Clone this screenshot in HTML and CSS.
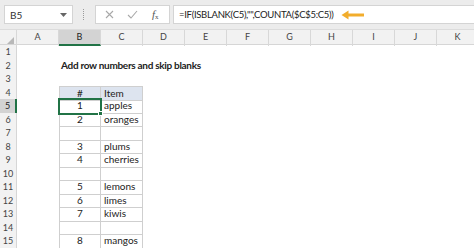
FILE: index.html
```html
<!DOCTYPE html>
<html lang="en">
<head>
    <meta charset="UTF-8">
    <title>Add row numbers and skip blanks</title>
    <link rel="stylesheet" href="styles.css">
</head>
<body>
    <div class="formula-bar">
        <div class="name-box">
            <span>B5</span>
            <svg class="drop" width="7" height="4" viewBox="0 0 7 4"><path d="M0 0H7L3.5 4Z" fill="#666"/></svg>
        </div>
        <div class="grip"></div>
        <div class="fx-buttons">
            <svg width="9" height="9" viewBox="0 0 9 9"><path d="M1 1L8 8M8 1L1 8" stroke="#a8a8a8" stroke-width="1.1" fill="none"/></svg>
            <svg width="11" height="9" viewBox="0 0 11 9"><path d="M1 5L4 8L10 1" stroke="#a8a8a8" stroke-width="1.1" fill="none"/></svg>
            <span class="fx"><i>f</i><sub>x</sub></span>
        </div>
        <div class="formula">
            <span>=IF(ISBLANK(C5),"",COUNTA($C$5:C5))</span>
            <svg class="arrow" width="24" height="10" viewBox="0 0 24 10"><path d="M23 5H4" stroke="#f2ad2c" stroke-width="3" fill="none"/><path d="M0.5 5L7.5 0.5V9.5Z" fill="#f2ad2c"/></svg>
        </div>
    </div>

    <div class="sheet">
        <div class="row col-head">
            <div class="corner"></div>
            <div>A</div><div class="active">B</div><div>C</div><div>D</div><div>E</div><div>F</div><div>G</div><div>H</div><div>I</div><div>J</div><div>K</div>
        </div>
        <div class="row"><div class="rh">1</div></div>
        <div class="row"><div class="rh">2</div><div></div><div class="title">Add row numbers and skip blanks</div></div>
        <div class="row"><div class="rh">3</div></div>
        <div class="row"><div class="rh">4</div><div></div><div class="t num th">#</div><div class="t th">Item</div></div>
        <div class="row"><div class="rh active">5</div><div></div><div class="t num sel">1</div><div class="t">apples</div></div>
        <div class="row"><div class="rh">6</div><div></div><div class="t num">2</div><div class="t">oranges</div></div>
        <div class="row"><div class="rh">7</div><div></div><div class="t num"></div><div class="t"></div></div>
        <div class="row"><div class="rh">8</div><div></div><div class="t num">3</div><div class="t">plums</div></div>
        <div class="row"><div class="rh">9</div><div></div><div class="t num">4</div><div class="t">cherries</div></div>
        <div class="row"><div class="rh">10</div><div></div><div class="t num"></div><div class="t"></div></div>
        <div class="row"><div class="rh">11</div><div></div><div class="t num">5</div><div class="t">lemons</div></div>
        <div class="row"><div class="rh">12</div><div></div><div class="t num">6</div><div class="t">limes</div></div>
        <div class="row"><div class="rh">13</div><div></div><div class="t num">7</div><div class="t">kiwis</div></div>
        <div class="row"><div class="rh">14</div><div></div><div class="t num"></div><div class="t"></div></div>
        <div class="row"><div class="rh">15</div><div></div><div class="t num">8</div><div class="t">mangos</div></div>
        <div class="row"><div class="rh"></div></div>
    </div>
</body>
</html>
```

FILE: styles.css
```css
body {
    margin: 0;
    width: 474px;
    height: 248px;
    overflow: hidden;
    background: #fff;
    font-family: Lato, "Open Sans", sans-serif;
    color: #222;
}
.formula-bar {
    display: flex;
    align-items: center;
    height: 30px;
    background: #ececec;
    box-sizing: border-box;
    padding-left: 4px;
    border-bottom: 1px solid #dcdcdc;
}
.name-box, .fx-buttons, .formula {
    height: 19px;
    background: #fff;
    border: 1px solid #d4d4d4;
    box-sizing: border-box;
    display: flex;
    align-items: center;
    font-size: 10px;
}
.name-box {
    width: 69px;
    padding: 0 5px 0 5px;
    justify-content: space-between;
    color: #333;
}
.grip {
    width: 1px;
    height: 11px;
    margin: 0 10px;
    border-left: 1px dotted #9a9a9a;
}
.fx-buttons {
    width: 75px;
    padding-left: 9px;
    gap: 13px;
}
.fx {
    font-family: "Liberation Serif", serif;
    font-size: 11px;
    color: #555;
    margin-left: 1px;
}
.fx sub {
    font-size: 7px;
    vertical-align: -1px;
}
.formula {
    flex: 1;
    margin-left: 3px;
    padding-left: 5px;
    border-right: none;
    color: #222;
    font-size: 9.5px;
    letter-spacing: -0.3px;
}
.arrow {
    margin-left: 8px;
}
.sheet {
    font-size: 10px;
}
.row {
    display: grid;
    grid-template-columns: 17px repeat(11, 42px);
    height: 13.5px;
    line-height: 13.5px;
}
.row > div {
    box-sizing: border-box;
    white-space: nowrap;
}
.col-head {
    height: 14px;
    line-height: 14px;
    background: #f2f2f2;
    border-bottom: 1px solid #d6d6d6;
    font-size: 9px;
    color: #444;
}
.col-head > div {
    text-align: center;
    border-right: 1px solid #d8d8d8;
}
.col-head .active {
    background: #d3d3d3;
    border-bottom: 2px solid #217346;
    color: #222;
}
.corner {
    position: relative;
}
.corner::after {
    content: "";
    position: absolute;
    right: 2px;
    bottom: 2px;
    border-style: solid;
    border-width: 0 0 7px 7px;
    border-color: transparent transparent #b8b8b8 transparent;
}
.rh {
    background: #f2f2f2;
    border-right: 1px solid #d6d6d6;
    border-bottom: 1px solid #dedede;
    text-align: center;
    font-size: 9px;
    color: #444;
}
.rh.active {
    background: #d3d3d3;
    border-right: 2px solid #217346;
    color: #222;
}
.title {
    font-weight: bold;
    padding-left: 2px;
    letter-spacing: -0.3px;
    overflow: visible;
}
.t {
    border-right: 1px solid #cfcfcf;
    border-bottom: 1px solid #cfcfcf;
    padding-left: 3px;
}
.t.num {
    border-left: 1px solid #cfcfcf;
    text-align: center;
    padding-left: 0;
}
.th {
    background: #dde4ef;
    border-top: 1px solid #cfcfcf;
}
.sel {
    position: relative;
    outline: 2px solid #217346;
    outline-offset: -1px;
}
.sel::after {
    content: "";
    position: absolute;
    right: -3px;
    bottom: -3px;
    width: 3px;
    height: 3px;
    background: #217346;
    border: 1px solid #fff;
}
```
